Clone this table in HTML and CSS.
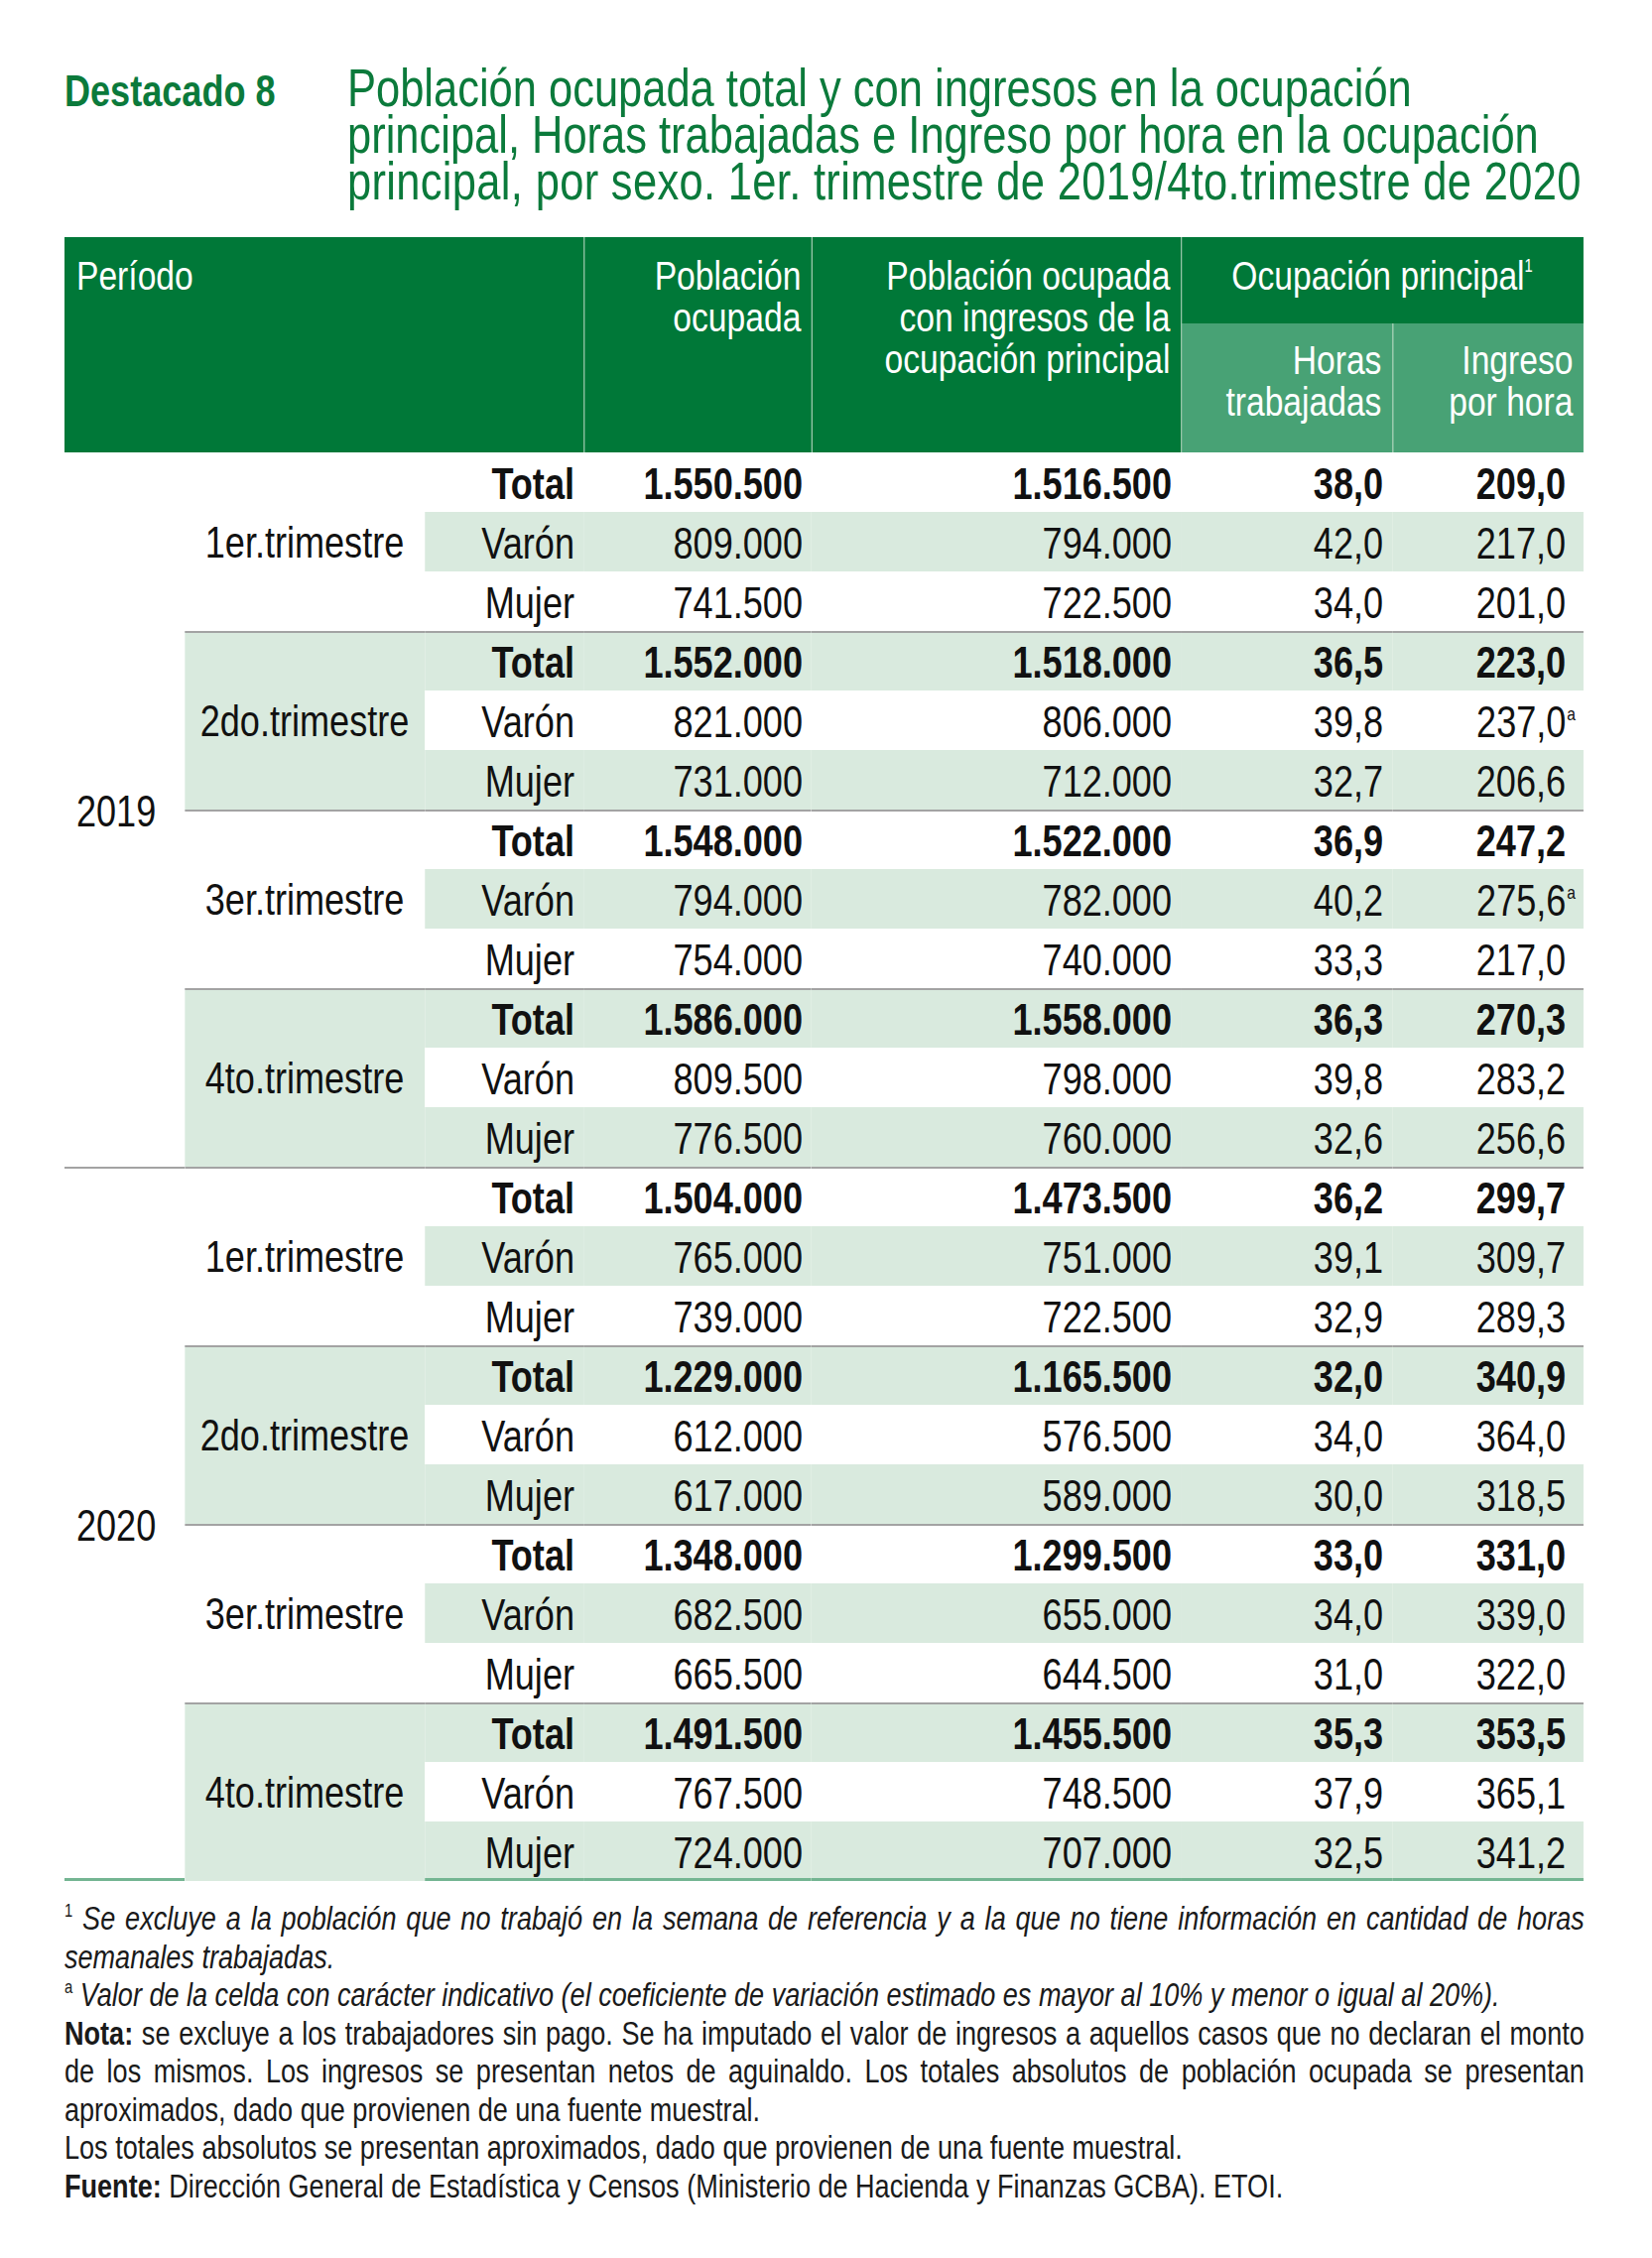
FILE: index.html
```html
<!DOCTYPE html>
<html lang="es">
<head>
<meta charset="utf-8">
<title>Destacado 8</title>
<link rel="stylesheet" href="styles.css">
</head>
<body>
<div class="page">
  <header class="title-block">
    <div class="label">Destacado 8</div>
    <h1 class="title">Población ocupada total y con ingresos en la ocupación<br>principal, Horas trabajadas e Ingreso por hora en la ocupación<br><span class="t3">principal, por sexo. 1er. trimestre de 2019/4to.trimestre de 2020</span></h1>
  </header>

  <table class="data">
    <colgroup>
      <col class="c-year"><col class="c-tri"><col class="c-sex"><col class="c-pob"><col class="c-ing"><col class="c-hor"><col class="c-iph">
    </colgroup>
    <thead>
      <tr class="h1">
        <th colspan="3" rowspan="2" class="h-left">Período</th>
        <th rowspan="2" class="h-div">Población<br>ocupada</th>
        <th rowspan="2" class="h-div">Población ocupada<br>con ingresos de la<br>ocupación principal</th>
        <th colspan="2" class="h-center h-div">Ocupación principal<sup class="h-sup">1</sup></th>
      </tr>
      <tr class="h2">
        <th class="sub h-div">Horas<br>trabajadas</th>
        <th class="sub h-div2">Ingreso<br>por hora</th>
      </tr>
    </thead>
    <tbody>
      <tr class="tot">
        <td rowspan="12" class="yr">2019</td>
        <td rowspan="3" class="tri">1er.trimestre</td>
        <td>Total</td><td>1.550.500</td><td>1.516.500</td><td>38,0</td><td class="last">209,0</td>
      </tr>
      <tr class="sh"><td>Varón</td><td>809.000</td><td>794.000</td><td>42,0</td><td class="last">217,0</td></tr>
      <tr><td>Mujer</td><td>741.500</td><td>722.500</td><td>34,0</td><td class="last">201,0</td></tr>

      <tr class="tot sh grp">
        <td rowspan="3" class="tri shaded">2do.trimestre</td>
        <td>Total</td><td>1.552.000</td><td>1.518.000</td><td>36,5</td><td class="last">223,0</td>
      </tr>
      <tr><td>Varón</td><td>821.000</td><td>806.000</td><td>39,8</td><td class="last">237,0<span class="flag">a</span></td></tr>
      <tr class="sh"><td>Mujer</td><td>731.000</td><td>712.000</td><td>32,7</td><td class="last">206,6</td></tr>

      <tr class="tot grp">
        <td rowspan="3" class="tri">3er.trimestre</td>
        <td>Total</td><td>1.548.000</td><td>1.522.000</td><td>36,9</td><td class="last">247,2</td>
      </tr>
      <tr class="sh"><td>Varón</td><td>794.000</td><td>782.000</td><td>40,2</td><td class="last">275,6<span class="flag">a</span></td></tr>
      <tr><td>Mujer</td><td>754.000</td><td>740.000</td><td>33,3</td><td class="last">217,0</td></tr>

      <tr class="tot sh grp">
        <td rowspan="3" class="tri shaded">4to.trimestre</td>
        <td>Total</td><td>1.586.000</td><td>1.558.000</td><td>36,3</td><td class="last">270,3</td>
      </tr>
      <tr><td>Varón</td><td>809.500</td><td>798.000</td><td>39,8</td><td class="last">283,2</td></tr>
      <tr class="sh"><td>Mujer</td><td>776.500</td><td>760.000</td><td>32,6</td><td class="last">256,6</td></tr>

      <tr class="tot year-start">
        <td rowspan="12" class="yr">2020</td>
        <td rowspan="3" class="tri">1er.trimestre</td>
        <td>Total</td><td>1.504.000</td><td>1.473.500</td><td>36,2</td><td class="last">299,7</td>
      </tr>
      <tr class="sh"><td>Varón</td><td>765.000</td><td>751.000</td><td>39,1</td><td class="last">309,7</td></tr>
      <tr><td>Mujer</td><td>739.000</td><td>722.500</td><td>32,9</td><td class="last">289,3</td></tr>

      <tr class="tot sh grp">
        <td rowspan="3" class="tri shaded">2do.trimestre</td>
        <td>Total</td><td>1.229.000</td><td>1.165.500</td><td>32,0</td><td class="last">340,9</td>
      </tr>
      <tr><td>Varón</td><td>612.000</td><td>576.500</td><td>34,0</td><td class="last">364,0</td></tr>
      <tr class="sh"><td>Mujer</td><td>617.000</td><td>589.000</td><td>30,0</td><td class="last">318,5</td></tr>

      <tr class="tot grp">
        <td rowspan="3" class="tri">3er.trimestre</td>
        <td>Total</td><td>1.348.000</td><td>1.299.500</td><td>33,0</td><td class="last">331,0</td>
      </tr>
      <tr class="sh"><td>Varón</td><td>682.500</td><td>655.000</td><td>34,0</td><td class="last">339,0</td></tr>
      <tr><td>Mujer</td><td>665.500</td><td>644.500</td><td>31,0</td><td class="last">322,0</td></tr>

      <tr class="tot sh grp">
        <td rowspan="3" class="tri shaded">4to.trimestre</td>
        <td>Total</td><td>1.491.500</td><td>1.455.500</td><td>35,3</td><td class="last">353,5</td>
      </tr>
      <tr><td>Varón</td><td>767.500</td><td>748.500</td><td>37,9</td><td class="last">365,1</td></tr>
      <tr class="sh end"><td>Mujer</td><td>724.000</td><td>707.000</td><td>32,5</td><td class="last">341,2</td></tr>
    </tbody>
  </table>

  <div class="notes">
    <p class="it"><span class="jl"><sup class="n-sup">1</sup> Se excluye a la población que no trabajó en la semana de referencia y a la que no tiene información en cantidad de horas</span><span class="ln">semanales trabajadas.</span></p>
    <p class="it"><span class="ln"><sup class="n-sup">a</sup> Valor de la celda con carácter indicativo (el coeficiente de variación estimado es mayor al 10% y menor o igual al 20%).</span></p>
    <p><span class="jl"><b>Nota:</b> se excluye a los trabajadores sin pago. Se ha imputado el valor de ingresos a aquellos casos que no declaran el monto</span><span class="jl">de los mismos. Los ingresos se presentan netos de aguinaldo. Los totales absolutos de población ocupada se presentan</span><span class="ln">aproximados, dado que provienen de una fuente muestral.</span></p>
    <p><span class="ln">Los totales absolutos se presentan aproximados, dado que provienen de una fuente muestral.</span></p>
    <p><span class="ln"><b>Fuente:</b> Dirección General de Estadística y Censos (Ministerio de Hacienda y Finanzas GCBA). ETOI.</span></p>
  </div>
</div>
</body>
</html>
```

FILE: styles.css
```css
/* The reference uses a condensed grotesque; Liberation Sans compressed
   horizontally to 82% gives Arial Narrow proportions. All horizontal
   measures below are in the un-compressed space (real px / 0.82). */

html, body {
  margin: 0;
  padding: 0;
  background: #ffffff;
}

body {
  font-family: "Liberation Sans", Arial, sans-serif;
  color: #1a1a1a;
  padding: 65px 0 0 65px;
  overflow-x: hidden;
}

.page {
  width: 1868px;
  transform: scaleX(0.82);
  transform-origin: 0 0;
}

/* Title */
.title-block {
  display: flex;
  align-items: flex-start;
}

.label {
  width: 347.6px;
  flex: none;
  padding-top: 3px;
  font-size: 44px;
  line-height: 47px;
  font-weight: bold;
  color: #0b7a3b;
}

.title {
  margin: 0;
  font-size: 53px;
  line-height: 47px;
  font-weight: normal;
  color: #0b7a3b;
  white-space: nowrap;
}

.t3 { letter-spacing: 0.4px; }

/* Table */
.data {
  margin-top: 33px;
  width: 1867.2px;
  border-collapse: separate;
  border-spacing: 0;
  table-layout: fixed;
}

.c-year { width: 147.6px; }
.c-tri { width: 295.1px; }
.c-sex { width: 195.1px; }
.c-pob { width: 280.5px; }
.c-ing { width: 453.7px; }
.c-hor { width: 259.8px; }
.c-iph { width: 235.4px; }

.data th {
  background: #007838;
  color: #ffffff;
  font-weight: normal;
  font-size: 41px;
  line-height: 42px;
  text-align: right;
  vertical-align: top;
  padding: 18px 13px 0 13px;
}

.data tr.h1 th { height: 69px; }
.data tr.h2 th { height: 114px; padding-top: 16px; }

.data th.h-left { text-align: left; padding-left: 14.6px; }
.data th.h-center { text-align: center; padding-left: 0; padding-right: 0; }
.data th.h-div { box-shadow: inset 1.5px 0 0 #9cc8ac; }
.data th.sub { background: #48a275; }
.data th.h-div2 { box-shadow: inset 1.5px 0 0 #a9d2b8; }

.h-sup {
  font-size: 18px;
  line-height: 0;
  vertical-align: 18px;
}

.data td {
  font-size: 44px;
  line-height: 57px;
  padding: 3px 11px 0 11px;
  text-align: right;
  color: #111111;
  white-space: nowrap;
  background: #ffffff;
}

.data td.last { padding-right: 22px; }

.data tr.sh td { background: #d9eade; }
.data tr.tot td { font-weight: bold; }

.data td.yr,
.data tr.tot td.yr {
  background: #ffffff;
  font-weight: normal;
  text-align: left;
  vertical-align: middle;
  padding-left: 14.6px;
}

.data td.tri,
.data tr.tot td.tri,
.data tr.sh td.tri {
  background: #ffffff;
  font-weight: normal;
  text-align: center;
  vertical-align: middle;
  padding: 0;
}

.data tr.sh td.tri.shaded,
.data td.tri.shaded { background: #d9eade; }

.data tr.grp td { box-shadow: inset 0 2px 0 #a3a3a3; }
.data tr.year-start td { box-shadow: inset 0 2px 0 #a3a3a3; }

.data tr.end td { box-shadow: inset 0 -3px 0 #74b592; }
.data tr.year-start td.yr { box-shadow: inset 0 2px 0 #a3a3a3, inset 0 -3px 0 #74b592; }

.flag {
  font-weight: normal;
  font-size: 19px;
  line-height: 0;
  vertical-align: 17px;
  margin-right: -12px;
  margin-left: 1px;
}

/* Notes */
.notes {
  margin-top: 19px;
  width: 1868px;
  font-size: 33px;
  line-height: 38.5px;
  color: #1a1a1a;
}

.notes p { margin: 0; }
.notes p.it { font-style: italic; }

.jl {
  display: block;
  text-align: justify;
  text-align-last: justify;
  white-space: nowrap;
}

.ln {
  display: block;
  white-space: nowrap;
}

.n-sup {
  font-size: 18px;
  line-height: 0;
  vertical-align: 13px;
  font-style: normal;
}
```
